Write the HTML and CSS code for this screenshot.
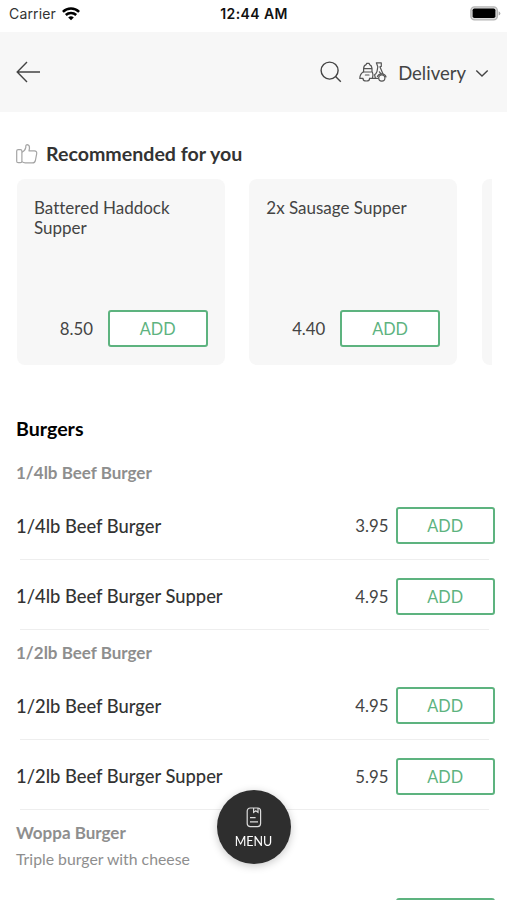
FILE: index.html
```html
<!DOCTYPE html>
<html lang="en">
<head>
    <meta charset="UTF-8">
    <meta name="viewport" content="width=device-width, initial-scale=1.0">
    <title>Menu</title>
    <link rel="stylesheet" href="styles.css">
</head>
<body>
    <div class="status-bar">
        <div class="carrier">
            <span>Carrier</span>
            <svg width="18" height="14" viewBox="0 0 18 14" fill="none" stroke="#000" stroke-width="2.5">
                <path d="M0.9 4.9C5.4 0.5 12.6 0.5 17.1 4.9"/>
                <path d="M3.8 8C6.7 5.2 11.3 5.2 14.2 8"/>
                <path d="M6.2 10.4Q9 8 11.8 10.4L9 13.2Z" fill="#000" stroke="none"/>
            </svg>
        </div>
        <div class="time">12:44 AM</div>
        <svg class="battery" width="31" height="15" viewBox="0 0 31 15">
            <rect x="0.9" y="0.9" width="26.4" height="13" rx="3.6" fill="#ddd" stroke="#b5b5b5" stroke-width="1.4"/>
            <rect x="2.6" y="2.5" width="22.8" height="9.6" rx="1.8" fill="#000"/>
            <path d="M28.6 5.2Q30.4 6 30.4 7.4T28.6 9.6Z" fill="#aaa"/>
        </svg>
    </div>

    <header class="header">
        <svg class="back" width="26" height="22" viewBox="0 0 26 22" fill="none" stroke="#444" stroke-width="1.4">
            <path d="M24 11H1.5M11 1L1.2 11L11 21"/>
        </svg>
        <svg class="search" width="22" height="22" viewBox="0 0 22 22" fill="none" stroke="#444" stroke-width="1.4">
            <circle cx="9.6" cy="9.6" r="8.5"/>
            <path d="M15.6 15.6L20.8 20.8"/>
        </svg>
        <svg class="scooter" width="28" height="20" viewBox="0 0 28 20" fill="none" stroke="#555" stroke-width="1.2" stroke-linejoin="round" stroke-linecap="round">
            <path d="M4.6 10V6.4Q5 3 7.2 2.6L7.6 1.4H10.2L10.6 2.6Q12.8 3.4 13 6.4V10M4.8 6.6H12.8M4.2 10H13.4Q14.4 12 13.4 16.4"/>
            <path d="M4.2 10Q0.9 12 0.8 16.4H3.6M6.4 13H10"/>
            <path d="M4 16.4A3.3 2.6 0 0 0 10.6 16.4"/>
            <path d="M10.6 16.4H19"/>
            <path d="M17.4 0.9H22.3V4.4L20.9 4.8L23.9 11.8M17.4 0.9L18.8 4.8L18 9.5Q17 12 15.6 12.8L16.4 16.2M20.4 9.8L22.2 12.2"/>
            <path d="M18.4 14.4Q19.6 11.6 23.3 11.8Q26.4 12.2 27 15"/>
            <circle cx="22.8" cy="16.1" r="3.1"/>
        </svg>
        <span class="delivery">Delivery</span>
        <svg class="chevron" width="14" height="9" viewBox="0 0 14 9" fill="none" stroke="#444" stroke-width="1.4">
            <path d="M1.3 1.4L7 7.1L12.7 1.4"/>
        </svg>
    </header>

    <main>
        <section class="recommended">
            <h2 class="recommended-title">
                <svg width="22" height="20" viewBox="0 0 22 20" fill="none" stroke="#a5a5a5" stroke-width="1.2" stroke-linejoin="round">
                    <path d="M5.9 7Q5.9 5.6 4.4 5.6H2.2Q0.7 5.6 0.7 7.1V17.2Q0.7 18.7 2.2 18.7H4.4Q5.9 18.7 5.9 17.2Z"/>
                    <path d="M5.9 8.2Q9.2 6.6 9.8 3.3V1.9Q10 0.7 11.3 0.7Q13.6 1 13.5 4.2L13 6.9H18.4Q21 7.2 20.7 9.6L19.4 16.5Q18.8 18.9 16.4 18.9H9.3Q7.3 18.9 5.9 17.6"/>
                </svg>
                Recommended for you
            </h2>
            <div class="cards">
                <div class="card">
                    <div class="card-name">Battered Haddock Supper</div>
                    <div class="card-bottom">
                        <span class="price">8.50</span>
                        <button class="add">ADD</button>
                    </div>
                </div>
                <div class="card">
                    <div class="card-name">2x Sausage Supper</div>
                    <div class="card-bottom">
                        <span class="price">4.40</span>
                        <button class="add">ADD</button>
                    </div>
                </div>
                <div class="card"></div>
            </div>
        </section>

        <section class="category">
            <h2 class="category-title">Burgers</h2>

            <div class="group">
                <h3 class="group-title">1/4lb Beef Burger</h3>
                <div class="item">
                    <span class="item-name">1/4lb Beef Burger</span>
                    <span class="price">3.95</span>
                    <button class="add">ADD</button>
                </div>
                <div class="item">
                    <span class="item-name">1/4lb Beef Burger Supper</span>
                    <span class="price">4.95</span>
                    <button class="add">ADD</button>
                </div>
            </div>

            <div class="group">
                <h3 class="group-title">1/2lb Beef Burger</h3>
                <div class="item">
                    <span class="item-name">1/2lb Beef Burger</span>
                    <span class="price">4.95</span>
                    <button class="add">ADD</button>
                </div>
                <div class="item">
                    <span class="item-name">1/2lb Beef Burger Supper</span>
                    <span class="price">5.95</span>
                    <button class="add">ADD</button>
                </div>
            </div>

            <div class="group">
                <h3 class="group-title">Woppa Burger</h3>
                <p class="group-text">Triple burger with cheese</p>
                <div class="item">
                    <button class="add" aria-label="Add"></button>
                </div>
            </div>
        </section>
    </main>

    <button class="menu-button">
        <svg width="16" height="21" viewBox="0 0 16 21" fill="none" stroke="#ddd" stroke-width="1.2">
            <rect x="1.2" y="1" width="13.4" height="18.6" rx="3"/>
            <path d="M7.6 1V5.4L9.8 3.8L12 5.4V1M4 10.6H9.6M4 14.8H12"/>
        </svg>
        MENU
    </button>
</body>
</html>
```

FILE: styles.css
```css
* {
    box-sizing: border-box;
}
body {
    margin: 0;
    height: 900px;
    overflow: hidden;
    background-color: #fff;
    color: #444;
    font-family: Lato, sans-serif;
    font-variant-ligatures: none;
}
h2, h3, p {
    margin: 0;
}
svg {
    display: block;
    flex-shrink: 0;
}
button {
    font-family: inherit;
    cursor: pointer;
}

/* status bar */
.status-bar {
    display: grid;
    grid-template-columns: 1fr auto 1fr;
    align-items: center;
    height: 32px;
    padding: 0 6px 5px 9px;
    font-family: Inter, sans-serif;
    font-size: 14px;
    color: #333;
}
.carrier {
    display: flex;
    align-items: center;
    gap: 6px;
    letter-spacing: 0.15px;
}
.time {
    margin-right: 2px;
    font-weight: 600;
    letter-spacing: 0.4px;
    color: #111;
}
.battery {
    justify-self: end;
}

/* header */
.header {
    display: flex;
    align-items: center;
    height: 80px;
    padding: 0 18px 0 16px;
    background-color: #f7f7f7;
}
.search {
    margin-left: auto;
    margin-right: 17px;
}
.delivery {
    margin: 1px 9px 0 11px;
    font-size: 18.5px;
}
.chevron {
    margin-top: 3px;
}

/* recommended */
.recommended {
    padding: 29px 15px 0 16px;
}
.recommended-title {
    display: flex;
    align-items: center;
    gap: 8px;
    height: 25px;
    margin-bottom: 13px;
    font-size: 19.6px;
    font-weight: 700;
    color: #333;
}
.cards {
    display: flex;
    gap: 24.8px;
    margin-left: 1px;
    overflow: hidden;
}
.card {
    display: flex;
    flex-direction: column;
    justify-content: space-between;
    flex: 0 0 207.5px;
    height: 186px;
    padding: 18.5px 17px 18px;
    border-radius: 8px;
    background-color: #f7f7f7;
}
.card-name {
    font-size: 17px;
    line-height: 20.5px;
}
.card-bottom {
    display: flex;
    align-items: center;
    justify-content: flex-end;
    gap: 15px;
}
.price {
    font-size: 16.8px;
}
.add {
    width: 99.5px;
    height: 37px;
    padding: 0;
    border: 2px solid #5db37f;
    border-radius: 3px;
    background-color: #fff;
    color: #5db37f;
    font-size: 16.3px;
}

/* menu list */
.category {
    padding: 51px 12px 0 16px;
}
.category-title {
    height: 34px;
    font-size: 19.6px;
    line-height: 26px;
    font-weight: 700;
    color: #000;
}
.group-title {
    padding-top: 11px;
    font-size: 17px;
    line-height: 24px;
    font-weight: 700;
    color: #8e8e8e;
}
.group-text {
    padding: 2px 0 5px;
    font-size: 15.8px;
    line-height: 24px;
    color: #8e8e8e;
}
.item {
    display: flex;
    align-items: center;
    justify-content: flex-end;
    height: 70.5px;
    margin-top: 4px;
    padding-top: 3px;
    background: linear-gradient(#eee, #eee) 4px 100% / calc(100% - 10px) 1px no-repeat;
}
.item + .item {
    margin-top: 0;
}
.item-name {
    flex: 1;
    font-size: 18.35px;
    font-weight: 500;
    color: #333;
}
.item .price {
    margin-right: 7px;
}

/* floating menu button */
.menu-button {
    position: fixed;
    left: 217px;
    top: 790px;
    display: flex;
    flex-direction: column;
    align-items: center;
    justify-content: center;
    gap: 6px;
    width: 74px;
    height: 74px;
    padding: 2px 1px 0 0;
    border: none;
    border-radius: 50%;
    background-color: #2e2e2e;
    box-shadow: 0 2px 9px rgba(0,0,0,0.22);
    color: #fff;
    font-size: 12.5px;
}
```
